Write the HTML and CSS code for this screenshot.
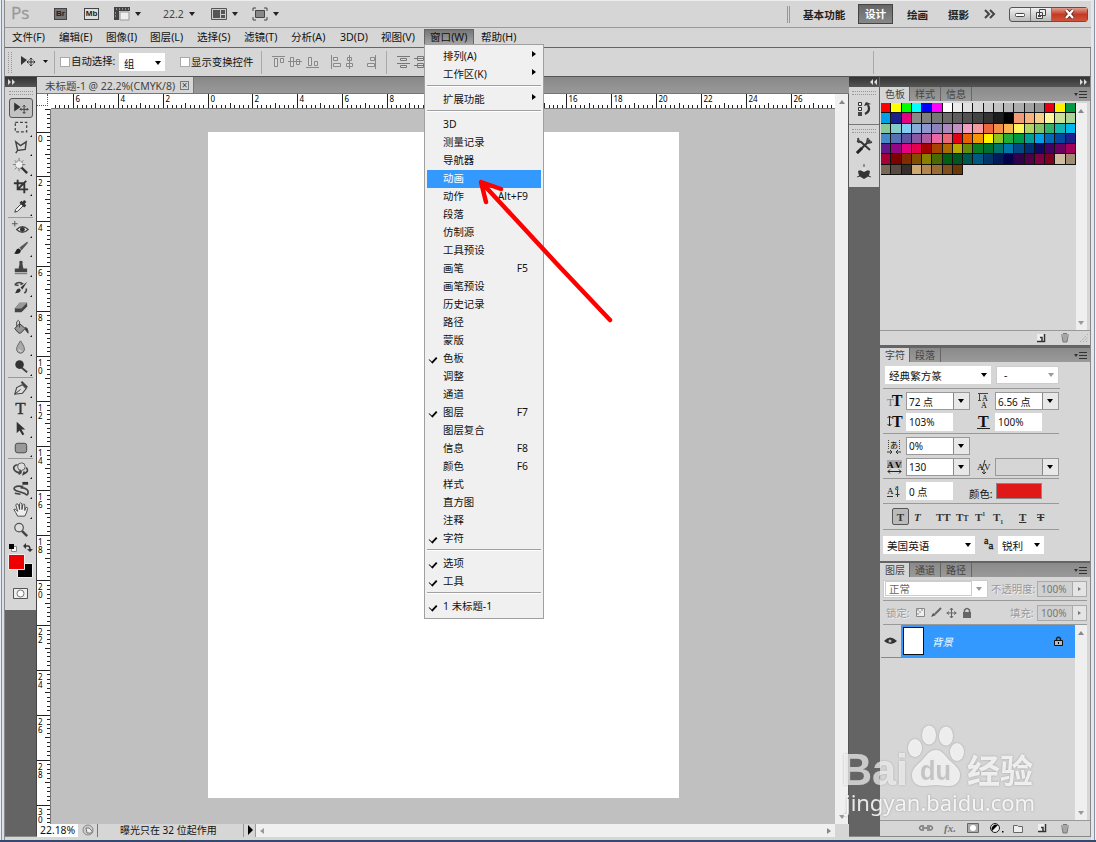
FILE: index.html
```html
<!DOCTYPE html>
<html lang="zh-CN">
<head>
    <meta charset="UTF-8">
    <title>未标题-1</title>
    <link rel="stylesheet" href="styles.css">
</head>
<body>
<div class="window">
    <header class="app-bar">
        <span class="ps-logo">Ps</span>
        <span class="badge br">Br</span>
        <span class="badge mb">Mb</span>
        <svg class="app-icon extras" width="30" height="14"><path d="M0 0h16v4H5v9H0z" fill="#444"/><path d="M6 5h9v8H6z" fill="#eee" stroke="#999"/><path d="M2 2h13M1 6h2M1 9h2" stroke="#ccc" stroke-dasharray="1 2"/><path d="M21 5h6l-3 4z" fill="#222"/></svg>
        <span class="zoom-level">22.2</span>
        <svg class="app-icon zoom-arrow" width="8" height="14"><path d="M1 5h6l-3 4z" fill="#222"/></svg>
        <svg class="app-icon arrange" width="28" height="14"><path d="M.5 1.500h15v11H.5z" fill="#ccc" stroke="#555"/><path d="M2 3h7v8H2zM10 3h4v4h-4zM10 8h4v3h-4z" fill="#555"/><path d="M21 5h6l-3 4z" fill="#222"/></svg>
        <svg class="app-icon screen" width="28" height="14"><path d="M3.500 3.500h9v7h-9z" fill="#888" stroke="#444"/><path d="M1 4V1h3M12 1h3v3M15 10v3h-3M4 13H1v-3" fill="none" stroke="#444"/><path d="M21 5h6l-3 4z" fill="#222"/></svg>
        <div class="workspaces">
            <b>基本功能</b>
            <b class="current">设计</b>
            <b>绘画</b>
            <b>摄影</b>
            <svg width="12" height="10"><path d="M1 1l4 4-4 4M6 1l4 4-4 4" fill="none" stroke="#444" stroke-width="2"/></svg>
        </div>
        <div class="window-buttons">
            <span><svg width="12" height="10"><rect x="1.500" y="4.500" width="9" height="3" rx="1" fill="#fff" stroke="#444"/></svg></span>
            <span><svg width="12" height="12"><path d="M4.500 1.500h6v6h-6zM1.500 4.500h6v6h-6z" fill="#eee" stroke="#444"/><path d="M3 7h3v2H3z" fill="#444"/></svg></span>
            <span class="close"><svg width="12" height="10"><path d="M2 1l7 8M9 1L2 9" stroke="#5a2020" stroke-width="4"/><path d="M2 1l7 8M9 1L2 9" stroke="#fff" stroke-width="2.400"/></svg></span>
        </div>
    </header>

    <nav class="menu-bar">
        <span>文件(F)</span><span>编辑(E)</span><span>图像(I)</span><span>图层(L)</span><span>选择(S)</span><span>滤镜(T)</span><span>分析(A)</span><span>3D(D)</span><span>视图(V)</span><span class="open">窗口(W)</span><span>帮助(H)</span>
    </nav>

    <div class="options-bar">
        <i class="grip-v"></i>
        <svg class="move-opt" width="30" height="16"><path d="M1 2l6 4-6 5z" fill="#333"/><path d="M11 4v8M7 8h8M9.500 5.500L11 4l1.500 1.500M9.500 10.500L11 12l1.500-1.500M8.500 6.500L7 8l1.500 1.500M13.500 6.500L15 8l-1.500 1.500" fill="none" stroke="#333"/><path d="M23 6h5l-2.500 3z" fill="#111"/></svg>
        <i class="rule"></i>
        <i class="check"></i><span class="auto-select">自动选择:</span>
        <span class="group-select">组<i class="arrow-down"></i></span>
        <i class="check"></i><span class="show-controls">显示变换控件</span>
        <i class="rule"></i>
        <svg class="align-icons" width="105" height="14" fill="#ddd" stroke="#888">
            <path d="M0 1.500h13M2.500 3.500h3v8h-3zM8.500 3.500h3v4h-3z"/>
            <path d="M16 6.500h14M18.500 2.500h3v9h-3zM24.500 4.500h3v5h-3z"/>
            <path d="M34 12.500h13M36.500 2.500h3v8h-3zM42.500 6.500h3v4h-3z"/>
            <path d="M59.500 0v14M61.500 2.500h4v3h-4zM61.500 8.500h7v3h-7z"/>
            <path d="M77.500 0v14M75.500 2.500h4v3h-4zM74.500 8.500h6v3h-6z"/>
            <path d="M103.500 0v14M98.500 2.500h4v3h-4zM95.500 8.500h7v3h-7z"/>
        </svg>
        <i class="rule second"></i>
        <svg class="align-icons" width="36" height="14" fill="#ddd" stroke="#777"><path d="M0 1.500h13M3.500 3.500h6v2h-6zM0 8.500h13M3.500 10.500h6v2h-6zM17 3.500h13M20.500 1.500h6v4h-6zM17 10.500h13M20.500 8.500h6v4h-6z"/></svg>
        <i class="rule far"></i>
    </div>

    <main class="work">
        <aside class="toolbox">
            <div class="dark-head"><svg width="9" height="6"><path d="M1 0l3 3-3 3zM5 0l3 3-3 3z" fill="#ddd"/></svg></div>
            <div class="tools">
                <i class="grip-h"></i>
                <div class="tool active"><svg viewBox="0 0 20 20"><path d="M3 4l7 5-7 5z" fill="#333"/><path d="M14 7v9M9.500 11.500h9M12.500 8.500L14 7l1.500 1.500M12.500 14.500L14 16l1.500-1.500M11 10l-1.500 1.500L11 13M17 10l1.500 1.500L17 13" fill="none" stroke="#333"/></svg></div>
                <div class="tool more"><svg viewBox="0 0 20 20"><path d="M4.500 4.500h12v10h-12z" fill="none" stroke="#444" stroke-width="1.300" stroke-dasharray="3 2"/></svg></div>
                <div class="tool more"><svg viewBox="0 0 20 20"><path d="M5 4l5 4 6-4-1 8-8 1zm2 9l-2 3" fill="none" stroke="#444" stroke-width="1.500"/></svg></div>
                <div class="tool more"><svg viewBox="0 0 20 20"><path d="M10 10l7 7" stroke="#333" stroke-width="2.500"/><circle cx="8.500" cy="8" r="4" fill="#eee" stroke="#555" stroke-dasharray="1 1"/><path d="M8.500 1v3M8.500 12v3M2 8h3M12 8h3M4 3.500l2 2M13 3.500l-2 2M4 13l2-2" stroke="#777"/></svg></div>
                <div class="tool more"><svg viewBox="0 0 20 20"><path d="M7 3v10h11M3 6.500h11V17M7 13l9-9" fill="none" stroke="#333" stroke-width="2"/></svg></div>
                <div class="tool more"><svg viewBox="0 0 20 20"><path d="M4 16l1-3 6-6 2 2-6 6z" fill="#fff" stroke="#333"/><path d="M10 5l5 5M12 8l3-4" stroke="#333" stroke-width="3"/></svg></div>
                <hr>
                <div class="tool more"><svg viewBox="0 0 20 20"><path d="M1 5h6M4 2v6" stroke="#555"/><path d="M6 11q6-6 12 0-6 6-12 0z" fill="#eee" stroke="#444" stroke-width="1.300"/><circle cx="12" cy="11" r="2.600" fill="#333"/></svg></div>
                <div class="tool more"><svg viewBox="0 0 20 20"><path d="M17 3l-8 6 2 3 7-8z" fill="#555"/><path d="M3 15c2 0 2-5 5-5 3 1 3 3 1 5-2 1-4 1-6 0z" fill="#222"/></svg></div>
                <div class="tool more"><svg viewBox="0 0 20 20"><path d="M4 11h4l1-5q-1-3 1.500-3T12 6l1 5h4v4H4z" fill="#444"/><path d="M4 16.500h13" stroke="#666"/></svg></div>
                <div class="tool more"><svg viewBox="0 0 20 20"><path d="M17 4l-7 6 2 2zM4 16c2-1 1-5 5-5 2 1 2 5-5 5z" fill="#333"/><path d="M4 7q4-4 8-1l-2 1M4 7l4 1M14 16q3-2 2-5" fill="none" stroke="#444" stroke-width="1.600"/></svg></div>
                <div class="tool more"><svg viewBox="0 0 20 20"><path d="M9 5h8v4l-6 6H4v-4z" fill="#444"/><path d="M9 5h8l-6 6H4z" fill="#999"/></svg></div>
                <div class="tool more"><svg viewBox="0 0 20 20"><path d="M4 11l5-5 6 5-5 5q-2 1-6-5z" fill="#999" stroke="#333"/><path d="M9 10V4q-1-3-3 0v5" fill="none" stroke="#444"/><path d="M15 10q3 0 3 6l-3-4" fill="#333" stroke="#444"/></svg></div>
                <div class="tool more"><svg viewBox="0 0 20 20"><path d="M10 3q-5 7-4 10 1 3 4 3t4-3q1-3-4-10z" fill="#aaa" stroke="#666"/><path d="M8 12q1 2 3 2" stroke="#eee" fill="none"/></svg></div>
                <div class="tool more"><svg viewBox="0 0 20 20"><path d="M11 11l6 5" stroke="#444" stroke-width="2"/><circle cx="9" cy="8" r="4.500" fill="#333"/></svg></div>
                <hr>
                <div class="tool more"><svg viewBox="0 0 20 20"><path d="M4 16l2-7 6-3 4 4-4 5z" fill="#ddd" stroke="#444" stroke-width="1.200"/><path d="M11 3l6 6" stroke="#444" stroke-width="2.300"/><path d="M4 16l6-5" stroke="#333"/></svg></div>
                <div class="tool more type-tool">T</div>
                <div class="tool more"><svg viewBox="0 0 20 20"><path d="M6 3l9 8h-4l3 5-2 1-3-5-3 3z" fill="#333"/></svg></div>
                <div class="tool more"><svg viewBox="0 0 20 20"><rect x="4.500" y="4.500" width="12" height="10" rx="2.500" fill="#999" stroke="#444"/></svg></div>
                <hr>
                <div class="tool more"><svg viewBox="0 0 20 20"><circle cx="11" cy="7" r="4" fill="#ddd" stroke="#555"/><path d="M7 5C1 6 2 11 7 13h4M16 8q4 4-3 7l1-3M11 13l-2-2m2 2l-3 2" fill="none" stroke="#444" stroke-width="1.800"/></svg></div>
                <div class="tool more"><svg viewBox="0 0 20 20"><path d="M12 2h6v3h-6z" fill="#333"/><path d="M13 7C4 5 1 9 5 11s9 2 12 5M17 16c3-5-1-8-7-8M4 14l6 1" fill="none" stroke="#444" stroke-width="1.700"/></svg></div>
                <div class="tool more"><svg viewBox="0 0 20 20"><path d="M7 17q-2-4-4-7 1-2 4 2L5 5q1-2 3 0l1 5V4q1-2 2.500 0v6l1-5q1-2 2 0v6l1-3q2-1 2 1-1 5-3 8z" fill="#eee" stroke="#444"/></svg></div>
                <div class="tool"><svg viewBox="0 0 20 20"><path d="M11 11l6 6" stroke="#444" stroke-width="2.500"/><circle cx="8.500" cy="8" r="4.500" fill="#ddd" stroke="#555" stroke-width="1.300"/></svg></div>
                <div class="color-tools">
                    <svg width="31" height="46"><path d="M6.500 6.500h5v5h-5z" fill="#fff" stroke="#888"/><path d="M4 4h5v5H4z" fill="#000"/><path d="M20 6h3q2 0 2 4" fill="none" stroke="#333" stroke-width="1.500"/><path d="M18 6l3-3v6zM22 9h6l-3 3z" fill="#333"/><path d="M12.500 23.500h15v14h-15z" fill="#000" stroke="#eee"/><path d="M3.500 14.500h16v15h-16z" fill="#ee0000" stroke="#eee"/></svg>
                </div>
                <svg class="mask" width="15" height="11"><path d="M.5.5h14v10H.5z" fill="#eee" stroke="#555"/><circle cx="7.500" cy="5.500" r="3.500" fill="#fff" stroke="#777"/></svg>
            </div>
        </aside>

        <section class="document">
            <div class="tabs-row"><span class="doc-tab">未标题-1 @ 22.2%(CMYK/8)<i class="tab-close">×</i></span></div>
            <div class="doc-grid">
                <div class="corner"></div>
                <svg class="ruler-h" id="rulerH"></svg>
                <div class="v-scroll"><i class="arrow-up"></i><i class="arrow-down pale"></i></div>
                <svg class="ruler-v" id="rulerV"></svg>
                <div class="canvas"><div class="page"></div></div>
            </div>
            <div class="status-bar">
                <span class="percent">22.18%</span>
                <span class="status-icon"><svg width="12" height="12"><circle cx="6" cy="6" r="5" fill="#ccc" stroke="#888"/><path d="M4 4h3l3 3v2H5z" fill="#eee" stroke="#777"/></svg></span>
                <span class="status-text">曝光只在 32 位起作用</span>
                <span class="status-play"><svg width="7" height="10"><path d="M1 0l5 5-5 5z"/></svg></span>
                <span class="h-scroll"><i class="arrow-left"></i><i class="arrow-right"></i></span>
            </div>
        </section>

        <aside class="dock">
            <div class="dark-head"><svg width="9" height="6"><path d="M4 0L1 3l3 3zM8 0L5 3l3 3z" fill="#ddd"/></svg></div>
            <div class="dock-group one"><i class="grip-h"></i><svg width="18" height="16"><path d="M3.500 1.500h3v3h-3zM3.500 6.500h3v3h-3z" fill="#eee" stroke="#333"/><path d="M3 11h4v4H3z" fill="#444"/><path d="M10 13q6-3 3-9" fill="none" stroke="#333" stroke-width="2.200"/><path d="M9 5l2-4 5 2z" fill="#333"/></svg></div>
            <div class="dock-group two"><i class="grip-h"></i><svg width="18" height="18"><path d="M2 16L15 3M2 4l4 1 9 8" stroke="#333" stroke-width="2" fill="none"/><path d="M2 16l5-5" stroke="#222" stroke-width="3"/><path d="M12 5l1-4M13 6l4-1M3 1l1 5" stroke="#444" stroke-width="2"/></svg>
                <svg class="cube" width="16" height="16"><path d="M2 7l6-2 6 2-1 5-5 3-5-3z" fill="#333"/><path d="M4 6l4-3 4 3-4 2z" fill="#ddd"/><path d="M8 0v3M1 13l3-1M12 12l3 1" stroke="#444"/></svg></div>
        </aside>

        <aside class="panels">
            <div class="dark-head right"><svg width="9" height="6"><path d="M1 0l3 3-3 3zM5 0l3 3-3 3z" fill="#ddd"/></svg></div>
            <section class="panel swatches-panel">
                <div class="panel-tabs"><span class="on">色板</span><span>样式</span><span>信息</span><i class="panel-menu"></i></div>
                <div class="swatches-body">
                    <div class="swatches" id="swatches"></div>
                    <div class="panel-scroll"><i class="arrow-up"></i><i class="arrow-down pale"></i></div>
                </div>
                <div class="panel-foot">
                    <svg width="10" height="10"><path d="M1 1h7v7H1z" fill="#eee"/><path d="M8.500 1v7.500H1M4 4.500h2V8" fill="none" stroke="#333" stroke-width="1.500"/></svg>
                    <svg width="10" height="11"><path d="M1 3h8M3 1.500h4M2 4l1 6h4l1-6M4 4v6M6 4v6" fill="none" stroke="#777"/></svg>
                    <svg width="10" height="10"><path d="M1 9L9 1M4 9l5-5M7 9l2-2" stroke="#999" stroke-dasharray="1 1.500"/></svg>
                </div>
            </section>

            <section class="panel char-panel">
                <div class="panel-tabs"><span class="on">字符</span><span>段落</span><i class="panel-menu"></i></div>
                <div class="char-row fonts"><span class="select family">经典繁方篆<i class="arrow-down"></i></span><span class="select face">-<i class="arrow-down pale"></i></span></div>
                <div class="char-block">
                    <span class="ti"><small>T</small><b>T</b></span><span class="combo">72 点<i></i></span>
                    <svg width="14" height="18"><path d="M1 1.500h10M2.500 2v6M1 8.500h3" stroke="#444"/><text x="5" y="9" font-size="8">A</text><text x="4" y="16" font-size="8">A</text></svg><span class="combo">6.56 点<i></i></span>
                    <span class="ti"><svg width="5" height="12"><path d="M2.500 1v10M.5 3l2-2 2 2M.5 9l2 2 2-2" fill="none" stroke="#222"/></svg><b>T</b></span><span class="field">103%</span>
                    <span class="ti wide"><b>T</b></span><span class="field">100%</span>
                </div>
                <div class="char-block">
                    <svg width="14" height="15"><path d="M1.500 1v9M12.500 1v9" stroke="#444" stroke-dasharray="1 1"/><text x="3" y="9" font-size="8">あ</text><path d="M0 13h5M9 13h5M3 11l2 2-2 2M11 11l-2 2 2 2" fill="none" stroke="#333"/></svg><span class="combo">0%<i></i></span><span></span><span></span>
                    <svg width="15" height="14"><path d="M0 0h15v8H0z" fill="#aaa"/><text x="0" y="8" font-size="9" font-weight="bold">A</text><text x="8" y="8" font-size="9" font-weight="bold">V</text><path d="M1 11.500h13M3 9.500l-2 2 2 2M12 9.500l2 2-2 2" fill="none" stroke="#222"/></svg><span class="combo">130<i></i></span>
                    <svg width="14" height="14"><text x="0" y="10" font-size="9">A</text><text x="7" y="10" font-size="9">V</text><path d="M8 0L5 10M7 13V9M5 12l2 2 2-2" fill="none" stroke="#333"/></svg><span class="combo blank"><i></i></span>
                </div>
                <div class="char-block baseline">
                    <svg width="14" height="14"><text x="0" y="10" font-size="9">A</text><text x="8" y="6" font-size="8">a</text><path d="M0 12.500h6M10.500 6v7M8.500 10.500h4" stroke="#333"/></svg><span class="field">0 点</span><span class="color-label">颜色:</span><span class="text-color"></span>
                </div>
                <div class="type-styles"><b class="pressed">T</b><i>T</i><b>TT</b><b>T<small>T</small></b><b>T<sup>1</sup></b><b>T<sub>1</sub></b><u>T</u><s>T</s></div>
                <div class="char-row lang"><span class="select lang-select">美国英语<i class="arrow-down"></i></span><span class="aa"><sup>a</sup>a</span><span class="select sharp">锐利<i class="arrow-down"></i></span></div>
            </section>

            <section class="panel layers-panel">
                <div class="panel-tabs"><span class="on">图层</span><span>通道</span><span>路径</span><i class="panel-menu"></i></div>
                <div class="layer-opts blend"><span class="mode"><em>正常</em><i class="arrow-down pale"></i></span><span class="dim">不透明度:</span><span class="amount">100%<i></i></span></div>
                <div class="layer-opts locks"><span class="dim">锁定:</span>
                    <svg width="58" height="12"><path d="M1.500 1.500h8v8h-8z" fill="#eee" stroke="#888"/><path d="M2 2h2v2H2zM6 2h2v2H6zM4 4h2v2H4zM2 6h2v2H2z" fill="#bbb"/><path d="M26 1l-6 6" stroke="#666" stroke-width="2"/><path d="M16 10l2-4 3 2z" fill="#555"/><path d="M36.500 1v10M31.500 6h10M35 3l1.500-2L38 3M35 9l1.500 2L38 9M34 4.500L32 6l2 1.500M39 4.500L41 6l-2 1.500" fill="none" stroke="#666"/><rect x="48" y="5" width="8" height="6" fill="#666"/><path d="M49.500 5V3q2.500-3 5 0v2" fill="none" stroke="#666" stroke-width="1.500"/></svg>
                    <span class="dim fill">填充:</span><span class="amount">100%<i></i></span></div>
                <div class="layers-body">
                    <div class="layers-list">
                        <div class="layer">
                            <span class="eye"><svg width="13" height="12"><path d="M0 6q6-7 13 0-6 6-13 0z" fill="#333"/><circle cx="6" cy="6" r="1.500" fill="#bbb"/></svg></span>
                            <i class="thumb"></i><span class="layer-name">背景</span>
                            <svg width="9" height="10"><path d="M2.500 5V2.500q2-2.500 4 0V5" fill="none" stroke="#222" stroke-width="1.300"/><path d="M.5 4.500h8v5h-8z" fill="#bbb" stroke="#111"/><path d="M4 6h1v2H4z"/></svg>
                        </div>
                    </div>
                    <div class="panel-scroll"><i class="arrow-up"></i><i class="arrow-down pale"></i></div>
                </div>
                <div class="layers-foot">
                    <svg width="16" height="10"><path d="M6 3H3Q0 5 3 7h3M9 3h4q3 2 0 4H9M4 5h8" fill="none" stroke="#777" stroke-width="1.500"/></svg>
                    <span class="fx">fx.</span>
                    <svg width="12" height="10"><path d="M.5.5h11v9H.5z" fill="#aaa" stroke="#666"/><circle cx="6" cy="5" r="3" fill="#fff"/></svg>
                    <svg width="14" height="10"><circle cx="5" cy="5" r="4.500" fill="#eee" stroke="#222"/><path d="M2 8A4.500 4.500 0 0 1 8 2z"/><path d="M12 8h1.500v1.500H12z"/></svg>
                    <svg width="10" height="9"><path d="M.5 1.500h4l1 1h4v6h-9z" fill="#eee" stroke="#666"/></svg>
                    <svg width="10" height="10"><path d="M1 1h7v7H1z" fill="#eee"/><path d="M8.500 1v7.500H1M4 4.500h2V8" fill="none" stroke="#333" stroke-width="1.500"/></svg>
                    <svg width="10" height="11"><path d="M1 3h8M3 1.500h4M2 4l1 6h4l1-6M4 4v6M6 4v6" fill="none" stroke="#777"/></svg>
                </div>
            </section>
        </aside>
    </main>
</div>

<div class="dropdown">
    <div class="item">排列(A)<i></i></div>
    <div class="item">工作区(K)<i></i></div>
    <hr>
    <div class="item">扩展功能<i></i></div>
    <hr>
    <div class="item">3D</div>
    <div class="item">测量记录</div>
    <div class="item">导航器</div>
    <div class="item selected">动画</div>
    <div class="item">动作<kbd>Alt+F9</kbd></div>
    <div class="item">段落</div>
    <div class="item">仿制源</div>
    <div class="item">工具预设</div>
    <div class="item">画笔<kbd>F5</kbd></div>
    <div class="item">画笔预设</div>
    <div class="item">历史记录</div>
    <div class="item">路径</div>
    <div class="item">蒙版</div>
    <div class="item checked">色板</div>
    <div class="item">调整</div>
    <div class="item">通道</div>
    <div class="item checked">图层<kbd>F7</kbd></div>
    <div class="item">图层复合</div>
    <div class="item">信息<kbd>F8</kbd></div>
    <div class="item">颜色<kbd>F6</kbd></div>
    <div class="item">样式</div>
    <div class="item">直方图</div>
    <div class="item">注释</div>
    <div class="item checked">字符</div>
    <hr>
    <div class="item checked">选项</div>
    <div class="item checked">工具</div>
    <hr>
    <div class="item checked">1 未标题-1</div>
</div>

<svg class="red-arrow" width="140" height="150"><path d="M133 144L80 88 6 8M24 13L4 6l5 20" fill="none" stroke="#f00" stroke-width="4.500" stroke-linecap="round" stroke-linejoin="round"/></svg>

<svg class="watermark" width="204" height="104">
    <g fill="#fff">
        <text class="wm-latin" x="0" y="65" textLength="67" lengthAdjust="spacingAndGlyphs" opacity=".65">Bai</text>
        <g opacity=".8"><ellipse cx="74" cy="28" rx="7" ry="9"/><ellipse cx="88" cy="15" rx="7" ry="9.500"/><ellipse cx="105" cy="16" rx="7" ry="9.500"/><ellipse cx="116" cy="32" rx="7" ry="9"/>
        <path d="M95 30c5 0 8 4 12 9 6 6 12 9 12 16 0 8-6 11-12 11-5 0-8-1-12-1s-8 1-13 1c-6 0-11-4-11-11 0-7 6-10 12-17 4-5 7-8 12-8z"/></g>
        <text class="wm-du" x="79" y="60" textLength="31" lengthAdjust="spacingAndGlyphs">du</text>
        <text class="wm-cjk" x="126" y="63" textLength="66" lengthAdjust="spacingAndGlyphs" opacity=".8">经验</text>
        <text class="wm-url" x="4" y="91" textLength="190" opacity=".85">jingyan.baidu.com</text>
    </g>
</svg>
<script src="script.js"></script>
</body>
</html>
```
FILE: styles.css
```css
* {
    box-sizing: border-box;
    margin: 0;
    padding: 0;
}

body {
    width: 1096px;
    height: 842px;
    overflow: hidden;
    position: relative;
    background: linear-gradient(90deg, #e9edf2 0 1px, #7d93ad 1px 2px, #d9e0e9 2px 4px, #8a8a8a 4px 5px, #d6d6d6 5px);
    border-bottom: 2px solid #34496f;
    font: 10.4px "Noto Sans", "Noto Sans CJK SC", sans-serif;
    color: #111;
    padding-left: 5px;
}

svg {
    display: block;
    flex: none;
}

i { font-style: normal; }

.window {
    width: 1091px;
    height: 840px;
    background: linear-gradient(90deg, transparent 1086px, #e6e6e6 1086px 1089px, #8294ab 1089px 1090px, #eef 1090px);
}

/* top bars */
.app-bar {
    height: 28px;
    width: 1086px;
    display: flex;
    align-items: center;
    border-top: 1px solid #eee;
    border-bottom: 1px solid #999;
    background: #d6d6d6;
}

.ps-logo {
    width: 49px;
    padding-left: 6px;
    font: 17px/20px "Open Sans", sans-serif;
    margin-top: -3px;
    color: #999;
    -webkit-text-stroke: .3px #999;
}

.badge {
    width: 13px;
    height: 12px;
    margin-right: 17px;
    border: 1px solid #444;
    background: #777;
    color: #222;
    font: bold 8px/10px "Liberation Sans", sans-serif;
    text-align: center;
}

.badge.mb {
    width: 15px;
    margin-right: 15px;
    background: #ddd;
    color: #222;
}

.zoom-level {
    margin-left: 19px;
    width: 25px;
    color: #444;
}

.arrange { margin-left: 15px; }
.screen { margin-left: 13px; }

.workspaces {
    display: flex;
    align-items: center;
    margin-left: auto;
    padding-left: 13px;
    border-left: 3px double #999;
    height: 17px;
    color: #222;
    font-size: 10.600px;
}

.workspaces b { width: 55px; }

.workspaces b:nth-child(3), .workspaces b:nth-child(4) {
    width: 41px;
}

.workspaces .current {
    width: 35px;
    height: 20px;
    line-height: 18px;
    margin-right: 14px;
    border: 1px solid #444;
    background: linear-gradient(#666, #888);
    color: #fff;
    text-align: center;
}

.workspaces svg { margin-left: -5px; }

.window-buttons {
    display: flex;
    margin: 0 3px 0 13px;
    width: 79px;
    height: 15px;
    border: 1px solid #555;
    border-radius: 3px;
    background: linear-gradient(#eee, #bbb);
}

.window-buttons span {
    width: 21px;
    display: flex;
    justify-content: center;
    align-items: center;
    border-right: 1px solid #777;
}

.window-buttons .close {
    flex: 1;
    border: 0;
    background: linear-gradient(#e0a090, #c33a24 50%, #d0543c);
}

.menu-bar {
    width: 1086px;
    height: 20px;
    display: grid;
    grid-template-columns: 47px 47px 44px 47px 47px 47px 49px 41px 43px 57px 60px;
    padding-left: 7px;
    background: #d6d6d6;
    border-bottom: 1px solid #666;
    font-size: 10.600px;
    line-height: 19px;
    white-space: nowrap;
}

.menu-bar .open {
    margin-right: 7px;
    margin-top: 1px;
    padding-left: 5px;
    line-height: 15px;
    background: linear-gradient(#777, #aaa);
    border: 1px solid #666;
}

.options-bar {
    width: 1086px;
    height: 29px;
    display: flex;
    align-items: center;
    background: #d6d6d6;
    border-bottom: 1px solid #555;
    border-right: 1px solid #888;
    white-space: nowrap;
    overflow: hidden;
}

.grip-v {
    width: 4px;
    height: 21px;
    margin-left: 3px;
    border-left: 1px dotted #999;
    border-right: 1px dotted #999;
}

.move-opt { margin-left: 8px; }

.rule {
    width: 1px;
    height: 23px;
    margin: 0 4px 0 4px;
    background: #aaa;
    flex: none;
}

.check {
    width: 10px;
    height: 10px;
    margin: 0 1px;
    background: #fff;
    border: 1px solid #aaa;
    flex: none;
}

.auto-select {
    width: 48px;
    padding-bottom: 3px;
}

.group-select {
    display: flex;
    align-items: center;
    justify-content: space-between;
    width: 46px;
    height: 18px;
    margin-right: 14px;
    padding: 2px 4px 0 5px;
    background: #fff;
}

.show-controls { width: 66px; padding-bottom: 2px; }
.align-icons { margin-left: 6px; }
.rule.second { margin: 0 4px 0 9px; }

.rule.far {
    margin-left: auto;
    margin-right: 216px;
}

.arrow-down, .arrow-up, .arrow-left, .arrow-right {
    display: block;
    width: 0;
    height: 0;
    border: 3px solid transparent;
    border-top: 4px solid #000;
    border-bottom: 0;
}

.arrow-down.pale { border-top-color: #999; }

.arrow-up {
    border: 3px solid transparent;
    border-top: 0;
    border-bottom: 4px solid #888;
}

.arrow-left {
    border: 3px solid transparent;
    border-left: 0;
    border-right: 4px solid #999;
}

.arrow-right {
    border: 3px solid transparent;
    border-right: 0;
    border-left: 4px solid #888;
}

/* work area */
.work {
    display: flex;
    width: 1086px;
    height: 760px;
    background: #646464;
    border-right: 1px solid #888;
    border-bottom: 1px solid #888;
}

.dark-head {
    height: 10px;
    padding: 2px;
    background: linear-gradient(#333, #555);
}

.toolbox { width: 32px; border-right: 1px solid #444; }

.tools {
    height: 523px;
    background: #d6d6d6;
    display: flex;
    flex-direction: column;
    align-items: center;
}

.grip-h {
    width: 24px;
    height: 4px;
    margin: 4px 0 3px;
    border-top: 1px dotted #999;
    border-bottom: 1px dotted #999;
    flex: none;
}

.tool {
    width: 24px;
    height: 19.800px;
    position: relative;
    flex: none;
}

.tool svg {
    width: 19px;
    height: 19px;
    margin: 0 auto;
}

.tool.active {
    border: 1px solid #555;
    border-radius: 3px;
    background: #c2c2c2;
}

.tool.active svg { height: 18px; }

.tool.more::after {
    content: "";
    position: absolute;
    right: 1px;
    bottom: 1px;
    border: 1.500px solid #111;
    border-left-color: transparent;
    border-top-color: transparent;
}

.type-tool {
    font: 17px/20px "Liberation Serif", serif;
    text-align: center;
    color: #333;
    -webkit-text-stroke: .4px #333;
}

.tools hr {
    width: 25px;
    height: 1px;
    margin: 0 0 1px;
    border: 0;
    background: #999;
    flex: none;
}

.color-tools { margin-top: 0; flex: none; }
.mask { margin-top: 2px; }

.document {
    width: 812px;
    display: flex;
    flex-direction: column;
}

.tabs-row {
    height: 17px;
    background: linear-gradient(#888, #999);
    border-bottom: 1px solid #777;
}

.doc-tab {
    display: flex;
    align-items: center;
    width: 157px;
    height: 16px;
    padding-left: 8px;
    background: #d6d6d6;
    border-right: 1px solid #777;
    color: #444;
    font-size: 10.500px;
    white-space: nowrap;
    justify-content: space-between;
}

.tab-close {
    width: 9px;
    height: 9px;
    margin-right: 4px;
    border: 1px solid #777;
    font-size: 10px;
    line-height: 7px;
    text-align: center;
}

.doc-grid {
    display: grid;
    grid-template: 15px 715px / 14px 784px 14px;
    background: #fff;
}

.corner {
    background: #fff;
    border: dotted #555;
    border-width: 0 1px 1px 0;
    margin: 0 3px 3px 0;
}

.ruler-h {
    width: 784px;
    height: 15px;
    border-bottom: 1px solid #777;
}

.ruler-v {
    width: 14px;
    height: 715px;
    border-right: 1px solid #777;
}

.v-scroll {
    grid-column: 3;
    grid-row: 1 / 3;
    background: #f0f0f0;
    border-right: 1px solid #555;
    display: flex;
    flex-direction: column;
    justify-content: space-between;
    align-items: center;
    padding: 6px 0 5px;
}

.canvas {
    background: #c0c0c0;
    padding: 23px 0 0 157px;
}

.page {
    width: 471px;
    height: 666px;
    background: #fff;
}

.status-bar {
    height: 13px;
    display: flex;
    background: #d6d6d6;
    line-height: 13px;
}

.status-bar .percent {
    width: 41px;
    padding-left: 3px;
    background: #fff;
}

.status-icon { width: 19px; padding-left: 4px; }

.status-text {
    width: 146px;
    padding-left: 22px;
    border-left: 1px solid #777;
    font-size: 10px;
    white-space: nowrap;
}

.status-play {
    width: 13px;
    padding: 1px 3px;
    border-left: 1px solid #999;
    border-right: 1px solid #999;
}

.h-scroll {
    width: 579px;
    display: flex;
    justify-content: space-between;
    align-items: center;
    padding: 0 4px;
    background: #f0f0f0;
}

.dock { width: 30px; }
.dock .dark-head { padding-left: 20px; }

.dock-group {
    display: flex;
    flex-direction: column;
    align-items: center;
    background: #d6d6d6;
}

.dock-group.one {
    height: 38px;
    border-bottom: 1px solid #777;
}

.dock-group.one svg { margin-top: 3px; }
.dock-group.two { height: 62px; }
.dock-group.two svg { margin-top: 1px; }
.dock-group.two .cube { margin-top: 9px; }

.panels {
    width: 211px;
    padding-left: 1px;
}

.dark-head.right {
    display: flex;
    justify-content: flex-end;
}

.panel {
    background: #d6d6d6;
    overflow: hidden;
}

.panel-tabs {
    height: 14px;
    display: flex;
    background: linear-gradient(#8a8a8a, #9a9a9a);
    line-height: 14px;
    font-size: 10px;
    color: #444;
}

.panel-tabs span {
    width: 31px;
    padding-left: 5px;
    border-right: 1px solid #666;
}

.panel-tabs .on {
    width: 30px;
    background: #d6d6d6;
}

.panel-menu {
    width: 8px;
    height: 7px;
    margin: 4px 3px 0 auto;
    border-top: 1px solid #333;
    border-bottom: 1px solid #333;
    background: linear-gradient(transparent 2px, #333 2px 3px, transparent 3px);
}

.panel-menu::before {
    content: "";
    display: block;
    margin: 1px 0 0 -5px;
    width: 0;
    border: 2px solid transparent;
    border-top: 3px solid #333;
    border-bottom: 0;
}

.swatches-panel { height: 258px; }

.swatches-body {
    display: flex;
    justify-content: space-between;
    height: 230px;
    padding: 2px 3px 0 1px;
    border-bottom: 1px solid #999;
}

.swatches {
    display: grid;
    grid-template-columns: repeat(19, 10.250px);
    grid-auto-rows: 10.250px;
    align-content: start;
}

.swatches i {
    border: solid #111;
    border-width: 0 1px 1px 0;
}

.panel-scroll {
    width: 12px;
    background: #efefef;
    display: flex;
    flex-direction: column;
    align-items: center;
    justify-content: space-between;
    padding: 6px 0 5px;
}

.panel-foot {
    display: flex;
    justify-content: flex-end;
    align-items: center;
    gap: 14px;
    padding: 1px 1px;
}

.panel-foot svg:last-child { margin-left: -5px; }

.char-panel {
    height: 213px;
    margin-top: 3px;
}

.char-row {
    display: flex;
    align-items: center;
}

.char-row.fonts {
    width: 177px;
    height: 27px;
    margin-left: 3px;
    padding-left: 2px;
    border-bottom: 1px solid #999;
    gap: 5px;
}

.select {
    display: flex;
    align-items: center;
    justify-content: space-between;
    height: 18px;
    padding: 0 4px;
    background: #fff;
    font-size: 10.600px;
    flex: none;
}

.select.family { width: 106px; }
.select.face { width: 63px; padding-left: 7px; border: 1px solid #ccc; }

.char-block {
    display: grid;
    grid-template-columns: 21px 63px 26px 64px;
    grid-auto-rows: 18px;
    row-gap: 3px;
    width: 174px;
    margin-left: 3px;
    padding: 3px 0 2px 2px;
    border-bottom: 1px solid #999;
    align-items: center;
    justify-items: start;
    box-sizing: content-box;
}

.char-block.baseline { padding-bottom: 3px; }

.char-block > svg { font-family: "Liberation Serif", serif; margin-left: 2px; }
.char-block > svg:nth-child(4n+3), .char-block > .ti:nth-child(4n+3) { margin-left: 8px; }

.ti {
    display: flex;
    align-items: baseline;
    margin-left: 2px;
    font: 16px/16px "Liberation Serif", serif;
}

.ti small { font-size: 11px; color: #777; margin-right: -2px; }
.ti.wide { border-bottom: 1px solid #222; line-height: 13px; padding: 0 1px; }

.combo, .field {
    display: flex;
    align-items: center;
    width: 47px;
    height: 18px;
    padding-left: 3px;
    background: #fff;
    font-size: 10px;
}

.combo {
    width: 64px;
    border: 1px solid #999;
    padding-left: 2px;
    justify-content: space-between;
}

.combo i {
    width: 16px;
    height: 16px;
    margin-left: auto;
    border-left: 1px solid #888;
    background: #e8e8e8;
    padding: 6px 0 0 4px;
}

.combo i::before {
    content: "";
    display: block;
    width: 0;
    border: 3px solid transparent;
    border-top: 4px solid #000;
    border-bottom: 0;
}

.combo.blank { background: #d6d6d6; }
.color-label { width: 26px; margin-left: 0; padding-top: 5px; font-size: 10.400px; white-space: nowrap; }
.text-color { width: 46px; height: 16px; margin-left: 1px; border: 1px solid #888; background: #e01818; }

.type-styles {
    display: grid;
    grid-template-columns: 22px 22px 20px 19px 18px 26px 18px 12px;
    justify-items: start;
    align-items: center;
    width: 176px;
    height: 26px;
    margin-left: 3px;
    padding-left: 9px;
    border-bottom: 1px solid #999;
    font: bold 11px "Liberation Serif", serif;
    color: #333;
}

.type-styles i { font-style: italic; }
.type-styles small { font-size: 8px; }
.type-styles sup, .type-styles sub { font-size: 6px; line-height: 0; }

.pressed {
    width: 17px;
    height: 17px;
    line-height: 16px;
    border: 1px solid #555;
    border-radius: 2px;
    background: #bbb;
    text-align: center;
}

.char-row.lang { margin-top: 6px; padding-left: 3px; }
.lang-select { width: 92px; }
.sharp { width: 46px; margin-left: 2px; }
.aa { width: 21px; padding-left: 9px; font: 11px/16px "Liberation Serif", serif; white-space: nowrap; -webkit-text-stroke: .3px #111; }
.aa sup { font-size: 10px; line-height: 0; }

.layers-panel {
    height: 273px;
    margin-top: 2px;
}

.layer-opts {
    display: flex;
    align-items: center;
    margin: 0 3px;
    border-bottom: 1px solid #999;
    white-space: nowrap;
    color: #888;
}

.blend { height: 24px; }
.locks { height: 24px; padding-left: 3px; }

.mode {
    display: flex;
    justify-content: space-between;
    align-items: center;
    width: 105px;
    height: 18px;
    padding: 0 5px 0 1px;
    background: #fff;
    border: 1px solid #ccc;
}

.mode em {
    width: 87px;
    height: 15px;
    line-height: 15px;
    padding-left: 3px;
    border: 1px solid #ccc;
    font-style: normal;
    color: #666;
}

.dim { color: #999; text-shadow: 1px 1px #eee; }
.blend .dim { width: 46px; margin-left: 3px; }
.locks .dim { width: 29px; }
.locks .fill { margin-left: 37px; width: 27px; }

.amount {
    display: flex;
    width: 50px;
    height: 16px;
    padding-left: 3px;
    line-height: 14px;
    font-size: 10px;
    color: #777;
    border: 1px solid #aaa;
    background: #d0d0d0;
    justify-content: space-between;
    flex: none;
}

.amount i {
    width: 14px;
    background: #e4e4e4;
    border-left: 1px solid #aaa;
    padding: 5px;
}

.amount i::before {
    content: "";
    display: block;
    width: 0;
    border: 2px solid transparent;
    border-left: 3px solid #777;
    border-right: 0;
}

.layers-body {
    display: flex;
    height: 196px;
    padding: 0 3px 0 1px;
    justify-content: space-between;
    border-bottom: 1px solid #999;
}

.layers-list { width: 195px; }

.layer {
    display: flex;
    align-items: center;
    height: 33px;
    background: #3399ff;
    border-bottom: 1px solid #888;
}

.eye {
    width: 20px;
    height: 32px;
    display: flex;
    align-items: center;
    padding-left: 3px;
    background: #d6d6d6;
}

.thumb {
    width: 21px;
    height: 28px;
    margin: 0 8px 0 2px;
    background: #fff;
    border: 1px solid #111;
}

.layer-name {
    flex: 1;
    color: #fff;
    font-style: italic;
}

.layer svg:last-child { margin-right: 12px; }

.layers-foot {
    display: grid;
    grid-template-columns: 26px 23px 23px 23px 24px 23px 14px;
    align-items: center;
    height: 14px;
    padding-left: 38px;
}

.fx { font: italic bold 11px/12px "Liberation Serif", serif; color: #777; }

/* window menu */
.dropdown {
    position: absolute;
    left: 424px;
    top: 44px;
    width: 120px;
    height: 575px;
    padding: 3px 2px 0;
    background: #f0f0f0;
    border: 1px solid #a0a0a0;
}

.item {
    height: 18px;
    padding-left: 16px;
    position: relative;
    display: flex;
    justify-content: space-between;
    line-height: 17px;
    white-space: nowrap;
}

.item kbd {
    font: inherit;
    margin-right: 13px;
}

.item i {
    margin: 3px 5px 0 0;
    width: 0;
    height: 0;
    border: 3px solid transparent;
    border-left: 4px solid #000;
    border-right: 0;
}

.item.selected {
    background: #3399ff;
    color: #fff;
}

.item.checked::before {
    content: "";
    position: absolute;
    left: 2px;
    top: 6px;
    width: 7px;
    height: 4px;
    border-left: 1.500px solid #000;
    border-bottom: 2px solid #000;
    transform: rotate(-48deg) scale(.9);
}

.dropdown hr {
    height: 7px;
    border: 0;
    background: linear-gradient(transparent 1px, #a0a0a0 1px 2px, #fff 2px 3px, transparent 3px);
}

.red-arrow {
    position: absolute;
    left: 477px;
    top: 176px;
}

.watermark {
    position: absolute;
    left: 841px;
    top: 720px;
    filter: drop-shadow(0 0 1px rgba(110, 110, 110, .6));
}

.wm-latin { font: bold 45px "Liberation Sans", sans-serif; }
.wm-du { font: bold 28px "Liberation Sans", sans-serif; fill: #c4c4c4; }
.wm-cjk { font: bold 33px "Noto Sans CJK SC", sans-serif; }
.wm-url { font: 22px "Noto Sans", sans-serif; }
```
FILE: script.js
```js
const swatchRows = [
    '#ff0000 #ffff00 #00ff00 #00ffff #0000ff #ff00ff #ffffff #ebebeb #e1e1e1 #d7d7d7 #cccccc #c2c2c2 #b7b7b7 #acacac #a1a1a1 #959595 #e60012 #fff100 #009944',
    '#00a0e9 #1d2088 #e4007f #898989 #808080 #767676 #6b6b6b #5f5f5f #525252 #444444 #333333 #1c1c1c #000000 #f29b76 #f6b37f #facd89 #fff799 #cce198 #acd598',
    '#89c997 #84ccc9 #7ecef4 #88abda #8c97cb #8f82bc #aa89bd #c490bf #f19ec2 #f29c9f #eb6841 #f19149 #f8b551 #fff45c #b3d465 #80c269 #32b16c #13b5b1 #00b7ee',
    '#448aca #556fb5 #5f52a0 #8957a1 #ae5da1 #ea68a2 #eb6877 #e60012 #eb6100 #f39800 #fff100 #8fc31f #22ac38 #009944 #009e96 #00a0e9 #0068b7 #00479d #1d2088',
    '#601986 #920783 #e4007f #e5004f #a40000 #a84200 #ac6a00 #b7aa00 #638c0b #097c25 #007130 #00736d #0075a9 #004986 #002e73 #100964 #440062 #6a005f #a4005b',
    '#a40035 #7d0000 #7f2d00 #834e00 #8a8000 #486a00 #005e15 #005520 #005752 #005982 #003567 #001c58 #03004c #31004a #500047 #7e0043 #7d0022 #cfbda3 #9f8c77',
    '#7a6857 #584a40 #372d2a #cfa972 #b28850 #996c33 #81511c #6a3906'
];

document.getElementById('swatches').innerHTML = swatchRows.join(' ').split(' ')
    .map(c => `<i style="background:${c}"></i>`).join('');

// one major step (2 cm) on screen
const step = 44.87;

function ticks(origin, length, draw) {
    const first = Math.ceil(-origin / step * 10);
    const last = Math.floor((length - origin) / step * 10);
    for (let i = first; i <= last; i++) {
        const pos = Math.floor(origin + i * step / 10) + 0.5;
        draw(pos, i % 10 === 0, i % 5 === 0, Math.abs(i / 5));
    }
}

let h = '', v = '', labels = '';
ticks(157, 784, (p, major, mid, value) => {
    h += `M${p} ${major ? 0 : mid ? 9 : 11}V14`;
    // labels 10 to 14 lie under the open menu
    if (major && (p < 370 || p > 500)) labels += `<text x="${p + 2}" y="8">${value}</text>`;
});
document.getElementById('rulerH').innerHTML = `<path d="${h}" stroke="#222"/><g font-size="8">${labels}</g>`;

labels = '';
ticks(23, 715, (p, major, mid, value) => {
    v += `M${major ? 0 : mid ? 8 : 10} ${p}H13`;
    if (major) {
        String(value).split('').forEach((d, n) => {
            labels += `<text x="1" y="${p + 9 + n * 8}">${d}</text>`;
        });
    }
});
document.getElementById('rulerV').innerHTML = `<path d="${v}" stroke="#222"/><g font-size="8">${labels}</g>`;
```
